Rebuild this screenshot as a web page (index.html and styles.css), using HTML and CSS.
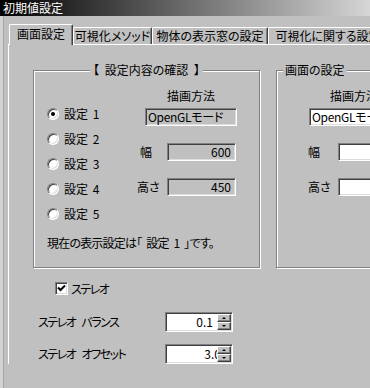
FILE: index.html
```html
<!DOCTYPE html>
<html lang="ja">
<head>
    <meta charset="UTF-8">
    <meta name="viewport" content="width=device-width, initial-scale=1.0">
    <title>初期値設定</title>
    <link rel="stylesheet" href="styles.css">
</head>
<body>
    <div class="titlebar">初期値設定</div>
    <div class="window">
        <div class="tabs">
            <div class="tab tab-active tab-screen">画面設定</div>
            <div class="tab tab-method">可視化メソッド</div>
            <div class="tab tab-view">物体の表示窓の設定</div>
            <div class="tab tab-vis">可視化に関する設定</div>
        </div>
        <div class="panel">
            <div class="groups">
                <div class="group group-check">
                    <div class="group-title">【 設定内容の確認 】</div>
                    <div class="group-body">
                        <div class="radios">
                            <div class="radio"><span class="radio-dot checked"></span>設定 1</div>
                            <div class="radio"><span class="radio-dot"></span>設定 2</div>
                            <div class="radio"><span class="radio-dot"></span>設定 3</div>
                            <div class="radio"><span class="radio-dot"></span>設定 4</div>
                            <div class="radio"><span class="radio-dot"></span>設定 5</div>
                        </div>
                        <div class="mode">
                            <div class="mode-label">描画方法</div>
                            <div class="field field-ro mode-box">OpenGLモード</div>
                            <div class="size-row">
                                <span class="size-label size-w">幅</span>
                                <div class="field field-ro num">600</div>
                            </div>
                            <div class="size-row">
                                <span class="size-label">高さ</span>
                                <div class="field field-ro num">450</div>
                            </div>
                        </div>
                    </div>
                    <p class="status">現在の表示設定は「 設定 1 」です。</p>
                </div>
                <div class="group group-screen">
                    <div class="group-title">画面の設定</div>
                    <div class="group-body">
                        <div class="mode">
                            <div class="mode-label">描画方法</div>
                            <div class="field mode-box">OpenGLモード</div>
                            <div class="size-row">
                                <span class="size-label">幅</span>
                                <div class="field num"></div>
                            </div>
                            <div class="size-row">
                                <span class="size-label">高さ</span>
                                <div class="field num"></div>
                            </div>
                        </div>
                    </div>
                </div>
            </div>

            <div class="check">
                <span class="checkbox">
                    <svg width="9" height="9" viewBox="0 0 9 9"><path d="M1 3.5 L3.5 6 L8 1.5" fill="none" stroke="#000" stroke-width="2"/></svg>
                </span>
                <span class="kana">ステレオ</span>
            </div>

            <div class="spin-row">
                <span class="spin-label kana">ステレオ バランス</span>
                <div class="spin">
                    <span class="spin-value">0.1</span>
                    <div class="spin-btns">
                        <div class="spin-btn"><span class="arrow-up"></span></div>
                        <div class="spin-btn"><span class="arrow-down"></span></div>
                    </div>
                </div>
            </div>
            <div class="spin-row spin-row-2">
                <span class="spin-label kana">ステレオ オフセット</span>
                <div class="spin">
                    <span class="spin-value spin-clip">3.0</span>
                    <div class="spin-btns">
                        <div class="spin-btn"><span class="arrow-up"></span></div>
                        <div class="spin-btn"><span class="arrow-down"></span></div>
                    </div>
                </div>
            </div>
        </div>
    </div>
</body>
</html>
```

FILE: styles.css
```css
body {
    margin: 0;
    width: 370px;
    height: 388px;
    overflow: hidden;
    background: #c0c0c0;
    box-shadow: inset 3px 0 #d4d4d4;
    color: #000;
    font-family: "Noto Sans CJK JP", sans-serif;
    font-size: 12px;
    line-height: 14px;
    font-feature-settings: "palt";
}

.titlebar {
    height: 16px;
    padding-left: 3px;
    line-height: 16px;
    color: #fff;
    background: linear-gradient(to right, #000, #d6d6d6);
}

.window {
    margin-left: 3px;
    border-left: 1px solid #a4a4a4;
    padding: 8px 0 0 4px;
    height: 372px;
    box-sizing: border-box;
}

/* tabs */
.tabs {
    display: flex;
    height: 20px;
    padding-left: 1px;
    white-space: nowrap;
}

.tab {
    flex: none;
    box-sizing: border-box;
    height: 17px;
    margin-top: 3px;
    border: 1px solid #fff;
    border-bottom: 0;
    border-right-color: #404040;
    box-shadow: inset -1px 0 #808080;
    border-radius: 2px 2px 0 0;
    text-align: center;
    line-height: 15px;
}

.tab-active {
    position: relative;
    z-index: 1;
    height: 21px;
    margin-top: 0;
    margin-bottom: -1px;
    background: #c0c0c0;
    line-height: 18px;
}

.tab-screen { width: 64px; }
.tab-method { width: 79px; }
.tab-view { width: 116px; }
.tab-vis { width: 120px; }

.panel {
    border-top: 1px solid #fff;
    border-left: 1px solid #fff;
    padding: 25px 0 0 24px;
}

/* group boxes */
.groups {
    display: flex;
    gap: 16px;
}

.group {
    flex: none;
    box-sizing: border-box;
    width: 227px;
    height: 198px;
    border: 1px solid #808080;
    box-shadow: inset 1px 1px #fff, 1px 1px #fff;
}

.group-title {
    display: table;
    margin: -8px auto 0;
    padding: 0 3px;
    background: #c0c0c0;
    word-spacing: 3px;
}

.group-screen .group-title {
    margin-left: 6px;
    padding: 0 2px;
}

.group-body {
    display: flex;
    margin-top: 12px;
}

.radios {
    box-sizing: border-box;
    width: 103px;
    padding: 12px 0 0 13px;
}

.radio {
    display: flex;
    align-items: center;
    gap: 5px;
    height: 25px;
    word-spacing: 2px;
}

.radio-dot {
    box-sizing: border-box;
    width: 12px;
    height: 12px;
    border-radius: 50%;
    border: 1px solid;
    border-color: #808080 #fff #fff #808080;
    box-shadow: inset 1px 1px #404040, inset -1px -1px #dcdcdc;
    background: #fff;
    display: flex;
    align-items: center;
    justify-content: center;
}

.radio-dot.checked::after {
    content: "";
    width: 4px;
    height: 4px;
    border-radius: 50%;
    background: #000;
}

.mode {
    display: flex;
    flex-direction: column;
    width: 100px;
}

.mode-label {
    padding-left: 8px;
    text-align: center;
}

.field {
    box-sizing: border-box;
    height: 18px;
    padding: 0 4px;
    border: 1px solid;
    border-color: #808080 #fff #fff #808080;
    box-shadow: inset 1px 1px #404040, inset -1px -1px #dcdcdc;
    background: #fff;
    line-height: 16px;
    white-space: nowrap;
    overflow: hidden;
}

.field-ro {
    background: #c0c0c0;
}

.num {
    text-align: right;
}

.mode-box {
    width: 92px;
    margin: 5px 0 0 8px;
    padding: 0 2px;
    letter-spacing: -0.3px;
}

.size-row {
    display: flex;
    margin-top: 17px;
}

.size-label {
    width: 30px;
    line-height: 18px;
}

.size-w {
    padding-left: 3px;
    box-sizing: border-box;
}

.size-row .field {
    width: 69px;
}

.group-screen .mode {
    padding-left: 28px;
    width: 160px;
}

.group-screen .mode-label {
    width: 90px;
    padding-left: 4px;
}

.group-screen .mode-box {
    width: 90px;
    margin-left: 4px;
}

.group-screen .size-label {
    width: 33px;
    padding-left: 3px;
    box-sizing: border-box;
}

.group-screen .size-row .field {
    width: 60px;
}

.status {
    margin: 10px 0 0 13px;
    letter-spacing: -0.8px;
    word-spacing: 3px;
}

/* stereo settings */
.kana {
    letter-spacing: -1.5px;
    word-spacing: 5px;
}

.check {
    display: flex;
    align-items: center;
    gap: 3px;
    height: 13px;
    margin: 14px 0 0 22px;
}

.checkbox {
    box-sizing: border-box;
    width: 13px;
    height: 13px;
    border: 1px solid;
    border-color: #808080 #fff #fff #808080;
    box-shadow: inset 1px 1px #404040, inset -1px -1px #dcdcdc;
    background: #fff;
    display: flex;
    align-items: center;
    justify-content: center;
}

.checkbox svg {
    display: block;
}

.spin-row {
    display: flex;
    align-items: center;
    height: 20px;
    margin-top: 17px;
    padding-left: 5px;
}

.spin-row-2 {
    margin-top: 12px;
}

.spin-label {
    width: 127px;
}

.spin {
    display: flex;
    box-sizing: border-box;
    width: 68px;
    height: 20px;
    padding: 1px;
    border: 1px solid;
    border-color: #808080 #fff #fff #808080;
    box-shadow: inset 1px 1px #404040, inset -1px -1px #dcdcdc;
    background: #fff;
}

.spin-value {
    flex: 1;
    padding-right: 4px;
    text-align: right;
    line-height: 16px;
}

.spin-clip {
    margin-right: -8px;
}

.spin-btns {
    position: relative;
    width: 14px;
    display: flex;
    flex-direction: column;
}

.spin-btn {
    box-sizing: border-box;
    height: 8px;
    background: #c0c0c0;
    border: 1px solid;
    border-color: #fff #404040 #404040 #fff;
    box-shadow: inset -1px -1px #808080;
    display: flex;
    align-items: center;
    justify-content: center;
}

.arrow-up,
.arrow-down {
    width: 0;
    height: 0;
    border-left: 2px solid transparent;
    border-right: 2px solid transparent;
}

.arrow-up {
    border-bottom: 2px solid #000;
}

.arrow-down {
    border-top: 2px solid #000;
}
```
